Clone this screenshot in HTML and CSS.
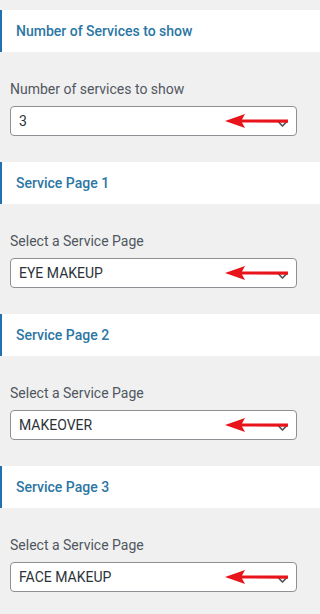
FILE: index.html
```html
<!DOCTYPE html>
<html>
<head>
<meta charset="utf-8">
<link rel="stylesheet" href="styles.css">
</head>
<body>
<div class="panel">
  <section class="sec">
    <h3 class="sec-title">Number of Services to show</h3>
    <div class="field">
      <label class="lbl">Number of services to show</label>
      <div class="select"><span class="val">3</span>
        <svg class="caret" width="9" height="6" viewBox="0 0 9 6"><path d="M0.5 0.8 L4.5 5 L8.5 0.8" fill="none" stroke="#50575e" stroke-width="1.6"/></svg>
        <svg class="arrow" width="66" height="14" viewBox="0 0 66 14"><path d="M0 7 L20 0 L17 5.6 L63 5.4 L63 8.8 L17 8.4 L20 14 Z" fill="#e8141c"/></svg>
      </div>
    </div>
  </section>
  <section class="sec">
    <h3 class="sec-title">Service Page 1</h3>
    <div class="field">
      <label class="lbl">Select a Service Page</label>
      <div class="select"><span class="val">EYE MAKEUP</span>
        <svg class="caret" width="9" height="6" viewBox="0 0 9 6"><path d="M0.5 0.8 L4.5 5 L8.5 0.8" fill="none" stroke="#50575e" stroke-width="1.6"/></svg>
        <svg class="arrow" width="66" height="14" viewBox="0 0 66 14"><path d="M0 7 L20 0 L17 5.6 L63 5.4 L63 8.8 L17 8.4 L20 14 Z" fill="#e8141c"/></svg>
      </div>
    </div>
  </section>
  <section class="sec">
    <h3 class="sec-title">Service Page 2</h3>
    <div class="field">
      <label class="lbl">Select a Service Page</label>
      <div class="select"><span class="val">MAKEOVER</span>
        <svg class="caret" width="9" height="6" viewBox="0 0 9 6"><path d="M0.5 0.8 L4.5 5 L8.5 0.8" fill="none" stroke="#50575e" stroke-width="1.6"/></svg>
        <svg class="arrow" width="66" height="14" viewBox="0 0 66 14"><path d="M0 7 L20 0 L17 5.6 L63 5.4 L63 8.8 L17 8.4 L20 14 Z" fill="#e8141c"/></svg>
      </div>
    </div>
  </section>
  <section class="sec">
    <h3 class="sec-title">Service Page 3</h3>
    <div class="field">
      <label class="lbl">Select a Service Page</label>
      <div class="select"><span class="val">FACE MAKEUP</span>
        <svg class="caret" width="9" height="6" viewBox="0 0 9 6"><path d="M0.5 0.8 L4.5 5 L8.5 0.8" fill="none" stroke="#50575e" stroke-width="1.6"/></svg>
        <svg class="arrow" width="66" height="14" viewBox="0 0 66 14"><path d="M0 7 L20 0 L17 5.6 L63 5.4 L63 8.8 L17 8.4 L20 14 Z" fill="#e8141c"/></svg>
      </div>
    </div>
  </section>
</div>
</body>
</html>
```
FILE: styles.css
```css
html, body {
  margin: 0;
  padding: 0;
  background: #f0f0f1;
  font-family: Roboto, "Liberation Sans", sans-serif;
}
.panel {
  padding-top: 10px;
  display: flex;
  flex-direction: column;
  gap: 26px;
}
.sec-title {
  margin: 0;
  height: 42px;
  box-sizing: border-box;
  background: #fff;
  border-left: 2px solid #2271b1;
  padding-left: 14px;
  display: flex;
  align-items: center;
  font-size: 14px;
  font-weight: 500;
  color: #2a76a4;
}
.field {
  padding: 28px 16px 0 10px;
  display: flex;
  flex-direction: column;
  gap: 8px;
}
.lbl {
  font-size: 14px;
  line-height: 18px;
  color: #50575e;
}
.select {
  position: relative;
  width: 287px;
  height: 30px;
  box-sizing: border-box;
  background: #fff;
  border: 1px solid #8c8f94;
  border-radius: 4px;
  display: flex;
  align-items: center;
  padding-left: 8px;
}
.val {
  font-size: 14px;
  color: #2c3338;
}
.caret {
  position: absolute;
  right: 9px;
  top: 14px;
}
.arrow {
  position: absolute;
  left: 214px;
  top: 7px;
}
```
